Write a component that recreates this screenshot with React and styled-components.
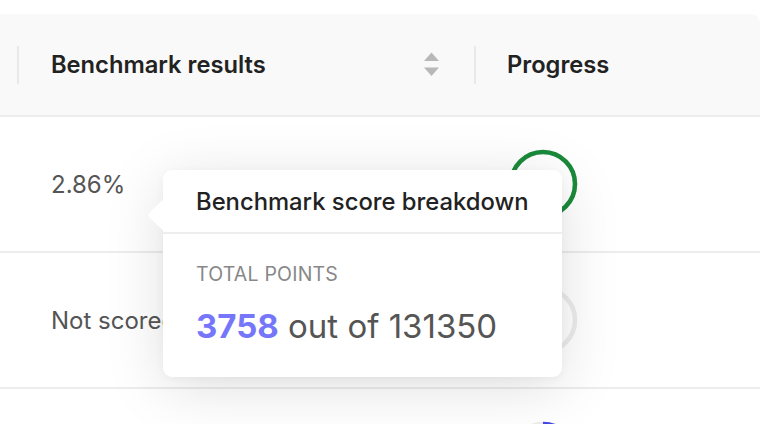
import React from "react";
import styled, { createGlobalStyle } from "styled-components";

const Global = createGlobalStyle`
  html, body { margin: 0; padding: 0; background: #ffffff; }
  body { font-family: Inter, "Noto Sans", sans-serif; -webkit-font-smoothing: antialiased; }
`;

const Page = styled.div`
  position: relative;
  width: 772px;
  height: 424px;
  overflow: hidden;
  padding-top: 14px;
  box-sizing: border-box;
`;

const Table = styled.div`
  width: 760px;
  display: flex;
  flex-direction: column;
`;

const HeaderRow = styled.div`
  display: grid;
  grid-template-columns: 17px 457px 1fr;
  height: 103px;
  background: #f9f9f9;
  border-top-right-radius: 9px;
  border-bottom: 2px solid #ececec;
  box-sizing: border-box;
  align-items: center;
`;

const HeaderCell = styled.div`
  height: 38px;
  display: flex;
  align-items: center;
  justify-content: space-between;
  padding: 0 35px 0 ${(p) => p.$pl}px;
  border-left: 2px solid #e9e9e9;
  font-size: 23.7px;
  font-weight: 600;
  color: #222;
  white-space: nowrap;
`;

const SortIcon = styled.svg`
  width: 15px;
  height: 25px;
  flex: none;
`;

const Row = styled.div`
  display: grid;
  grid-template-columns: 17px 457px 1fr;
  height: 136px;
  border-bottom: 2px solid #ececec;
  box-sizing: border-box;
  align-items: center;
`;

const Cell = styled.div`
  padding-left: 34px;
  font-size: 24px;
  color: #555;
  display: flex;
  align-items: center;
  white-space: nowrap;
`;

const ProgressCell = styled.div`
  padding-left: 34px;
  display: flex;
  align-items: center;
`;

const Ring = ({ pct, color }) => {
  const r = 32;
  const c = 2 * Math.PI * r;
  return (
    <svg width="70" height="70" viewBox="0 0 70 70">
      <circle cx="35" cy="35" r={r} fill="none" stroke="#ececec" strokeWidth="4.5" />
      {pct > 0 && (
        <circle
          cx="35"
          cy="35"
          r={r}
          fill="none"
          stroke={color}
          strokeWidth="4.5"
          strokeDasharray={`${(c * pct) / 100} ${c}`}
          transform="rotate(-90 35 35)"
        />
      )}
    </svg>
  );
};

const Tooltip = styled.div`
  position: absolute;
  left: 163px;
  top: 170px;
  width: 399px;
  height: 207px;
  background: #fff;
  border-radius: 9px;
  box-shadow: 0 10px 60px rgba(0, 0, 0, 0.13), 0 2px 8px rgba(0, 0, 0, 0.04);
  display: flex;
  flex-direction: column;
`;

const Arrow = styled.div`
  position: absolute;
  left: -11px;
  top: 34px;
  width: 22px;
  height: 22px;
  background: #fff;
  transform: rotate(45deg);
  border-radius: 2px;
`;

const TipTitle = styled.div`
  position: relative;
  height: 62px;
  display: flex;
  align-items: center;
  padding: 0 20px 0 33px;
  font-size: 23.8px;
  font-weight: 500;
  color: #222;
  white-space: nowrap;
  border-bottom: 2px solid #eeeeee;
  background: #fff;
  border-radius: 9px 9px 0 0;
`;

const TipBody = styled.div`
  padding: 28px 33px 0;
  display: flex;
  flex-direction: column;
  gap: 20px;
`;

const Label = styled.div`
  font-size: 19.5px;
  color: #888;
  letter-spacing: 0.2px;
  text-transform: uppercase;
`;

const Total = styled.div`
  font-size: 33px;
  color: #555;
  white-space: nowrap;
`;

const Score = styled.span`
  color: #7676fb;
  font-weight: 700;
`;

export default function App() {
  return (
    <Page>
      <Global />
      <Table>
        <HeaderRow>
          <div />
          <HeaderCell $pl={32}>
            Benchmark results
            <SortIcon viewBox="0 0 15 25">
              <path d="M7.5 0.5 L15 9 L0 9 Z" fill="#b8b8b8" />
              <path d="M0 15.5 L15 15.5 L7.5 24 Z" fill="#b8b8b8" />
            </SortIcon>
          </HeaderCell>
          <HeaderCell $pl={31}>Progress</HeaderCell>
        </HeaderRow>
        <Row>
          <div />
          <Cell>2.86%</Cell>
          <ProgressCell>
            <Ring pct={100} color="#1a8a3a" />
          </ProgressCell>
        </Row>
        <Row>
          <div />
          <Cell>Not scored</Cell>
          <ProgressCell>
            <Ring pct={0} color="#4646e6" />
          </ProgressCell>
        </Row>
        <Row>
          <div />
          <Cell />
          <ProgressCell>
            <Ring pct={12} color="#4646e6" />
          </ProgressCell>
        </Row>
      </Table>
      <Tooltip>
        <Arrow />
        <TipTitle>Benchmark score breakdown</TipTitle>
        <TipBody>
          <Label>Total points</Label>
          <Total>
            <Score>3758</Score> out of 131350
          </Total>
        </TipBody>
      </Tooltip>
    </Page>
  );
}
